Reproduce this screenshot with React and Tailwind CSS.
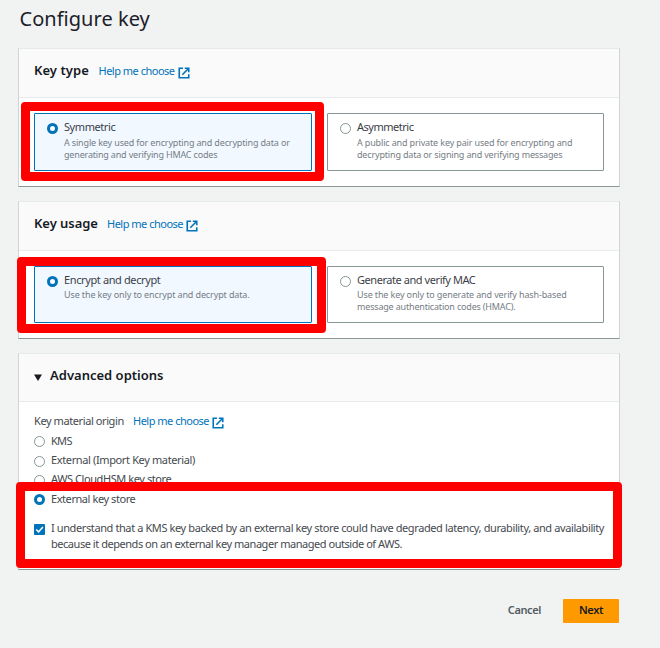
import React from "react";

function ExternalIcon() {
  return (
    <svg width="12" height="12" viewBox="0 0 12 12" fill="none" stroke="#0073bb" strokeWidth="1.6" className="shrink-0">
      <path d="M5 1.25H1.25V10.75H10.75V7.3" />
      <path d="M6.8 1.25H10.75V5.2M10.5 1.5L4.3 7.7" />
    </svg>
  );
}

function HelpLink({ className = "" }) {
  return (
    <a className={`flex items-center gap-[3px] text-[#0073bb] ${className}`}>
      <span className="w-[76px] text-[11px] leading-4 tracking-[-0.5px]">Help me choose</span>
      <span className="pt-[3px]"><ExternalIcon /></span>
    </a>
  );
}

function Radio({ checked, className = "" }) {
  return (
    <span
      className={`block size-[11px] shrink-0 rounded-full bg-white ${
        checked ? "border-[3.5px] border-[#0073bb]" : "border border-[#879596]"
      } ${className}`}
    />
  );
}

function Panel({ children, className = "" }) {
  return (
    <section className={`w-[602px] border border-t-[#e6e9e9] border-x-[#d0d4d5] border-b-[#8b9898] bg-white ${className}`}>
      {children}
    </section>
  );
}

function Tile({ checked, title, titleClass, children, className = "" }) {
  return (
    <div
      className={`flex rounded-[1px] border pl-3 ${
        checked ? "border-[#0073bb] bg-[#f1f8ff]" : "border-[#879596] bg-white"
      } ${className}`}
    >
      <Radio checked={checked} className="mt-[9px]" />
      <div className="pl-[6px] pt-[5px] whitespace-nowrap">
        <div className={`text-[11px] leading-4 text-[#3b4148] ${titleClass}`}>{title}</div>
        {children}
      </div>
    </div>
  );
}

function Option({ checked, children, className }) {
  return (
    <div className="flex h-[19.4px] items-center gap-[6px]">
      <Radio checked={checked} className="mt-[2px]" />
      <span className={`text-[11px] leading-4 ${className}`}>{children}</span>
    </div>
  );
}

export default function App() {
  return (
    <main className="relative h-[648px] w-[660px] overflow-hidden bg-[#f1f3f3] pl-[18px] font-['Noto_Sans',sans-serif] text-[#45494e] whitespace-nowrap">
      <h1 className="h-[48px] pt-[4px] pl-[1.5px] text-[20px] leading-[29px] tracking-[0.03px] text-[#1b2028]">Configure key</h1>

      <Panel className="h-[139px]">
        <header className="flex h-[49px] items-center border-b border-[#e9ebeb] bg-[#fafafa] pl-[15px] pb-[5px]">
          <h2 className="w-[64.5px] text-[13px] font-semibold tracking-[0.05px] text-[#16191f]">Key type</h2>
          <HelpLink className="pt-px" />
        </header>
        <div className="flex gap-[15px] px-[15px] pt-[15px]">
          <Tile checked title="Symmetric" titleClass="tracking-[-0.42px]" className="h-[58px] w-[278px]">
            <div className="pt-[2px] text-[9px] leading-3 text-[#757d85]">
              <p className="tracking-[-0.15px]">A single key used for encrypting and decrypting data or</p>
              <p className="tracking-[-0.18px]">generating and verifying HMAC codes</p>
            </div>
          </Tile>
          <Tile title="Asymmetric" titleClass="tracking-[-0.48px]" className="h-[58px] w-[277px]">
            <div className="pt-[2px] text-[9px] leading-3 text-[#757d85]">
              <p className="tracking-[-0.15px]">A public and private key pair used for encrypting and</p>
              <p className="tracking-[-0.17px]">decrypting data or signing and verifying messages</p>
            </div>
          </Tile>
        </div>
      </Panel>

      <Panel className="mt-[14px] h-[138px]">
        <header className="flex h-[49px] items-center border-b border-[#e9ebeb] bg-[#fafafa] pl-[15px] pb-[5px]">
          <h2 className="w-[73px] text-[13px] font-semibold tracking-[-0.05px] text-[#16191f]">Key usage</h2>
          <HelpLink className="pt-px" />
        </header>
        <div className="flex gap-[15px] px-[15px] pt-[15px]">
          <Tile checked title="Encrypt and decrypt" titleClass="tracking-[-0.38px]" className="h-[57px] w-[278px]">
            <div className="pt-px text-[9px] leading-3 text-[#757d85]">
              <p className="tracking-[-0.12px]">Use the key only to encrypt and decrypt data.</p>
            </div>
          </Tile>
          <Tile title="Generate and verify MAC" titleClass="tracking-[-0.44px]" className="h-[57px] w-[277px]">
            <div className="pt-px text-[9px] leading-3 text-[#757d85]">
              <p className="tracking-[-0.13px]">Use the key only to generate and verify hash-based</p>
              <p className="tracking-[-0.18px]">message authentication codes (HMAC).</p>
            </div>
          </Tile>
        </div>
      </Panel>

      <Panel className="mt-[14px] h-[217px]">
        <header className="flex h-[48px] items-center border-b border-[#e9ebeb] bg-[#fafafa] pl-[15px] pb-[4px]">
          <svg width="8" height="7" viewBox="0 0 8 7" className="mt-[4px]"><path d="M0 .5H8L4 7Z" fill="#16191f" /></svg>
          <h2 className="pl-[8px] text-[13px] font-semibold tracking-[0.01px] text-[#16191f]">Advanced options</h2>
        </header>
        <div className="px-[15px] pt-[9px]">
          <div className="flex h-[20px] items-center">
            <span className="w-[99px] text-[11px] leading-4 tracking-[-0.41px]">Key material origin</span>
            <HelpLink />
          </div>
          <Option className="tracking-[-0.7px]">KMS</Option>
          <Option className="tracking-[-0.37px]">External (Import Key material)</Option>
          <Option className="tracking-[-0.42px]">AWS CloudHSM key store</Option>
          <Option checked className="tracking-[-0.43px]">External key store</Option>
          <div className="flex gap-[6px] pt-[11px]">
            <svg width="11" height="11" viewBox="0 0 11 11" className="mt-[4px] shrink-0">
              <rect width="11" height="11" rx="1" fill="#0073bb" />
              <path d="M2.2 5.5L4.6 7.8L8.9 3" fill="none" stroke="#fff" strokeWidth="1.5" />
            </svg>
            <div className="text-[11px] leading-4">
              <p className="tracking-[-0.395px]">I understand that a KMS key backed by an external key store could have degraded latency, durability, and availability</p>
              <p className="tracking-[-0.46px]">because it depends on an external key manager managed outside of AWS.</p>
            </div>
          </div>
        </div>
      </Panel>

      <footer className="flex w-[601px] items-center justify-end gap-[22px] pt-[29px] text-[11px] font-semibold">
        <button className="pb-[2px] tracking-[-0.4px] text-[#545b64]">Cancel</button>
        <button className="h-6 w-14 rounded-[1px] bg-[#ff9900] pb-[2px] tracking-[-0.4px] text-[#16191f]">Next</button>
      </footer>

      <div className="pointer-events-none absolute left-[21px] top-[102px] h-[79px] w-[303px] rounded-[4px] border-9 border-[#ff0000]" />
      <div className="pointer-events-none absolute left-[17px] top-[257px] h-[76px] w-[309px] rounded-[4px] border-9 border-[#ff0000]" />
      <div className="pointer-events-none absolute left-[16px] top-[482px] h-[86px] w-[606px] rounded-[4px] border-9 border-[#ff0000]" />
    </main>
  );
}
